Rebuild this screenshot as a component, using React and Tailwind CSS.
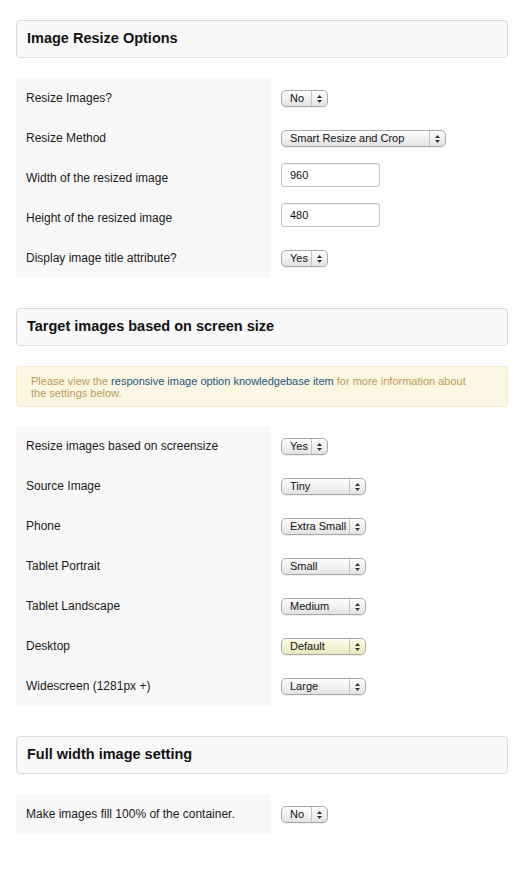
import React from "react";

function Arrows() {
  return (
    <svg width="5" height="8" viewBox="0 0 5 8" className="block">
      <path d="M2.5 0 L5 3 L0 3 Z" fill="#333" />
      <path d="M2.5 8 L5 5 L0 5 Z" fill="#333" />
    </svg>
  );
}

function Select({ value, w, yellow }) {
  const bg = yellow
    ? "bg-gradient-to-b from-[#fdfdf2] via-[#f3f1d2] to-[#e9e7c0]"
    : "bg-gradient-to-b from-[#ffffff] via-[#f1f1f1] to-[#e2e2e2]";
  return (
    <div
      className={`flex h-[17px] items-stretch rounded-[5px] border border-[#a9a9a9] shadow-[0_1px_0_rgba(0,0,0,0.06)] ${bg}`}
      style={{ width: w }}
    >
      <div className="flex flex-1 items-center pl-[8px] text-[11px] leading-none text-[#111]">
        {value}
      </div>
      <div className="flex w-[16px] items-center justify-center border-l border-[#c4c4c4]">
        <Arrows />
      </div>
    </div>
  );
}

function Input({ value }) {
  return (
    <div className="mt-[-7px] flex h-[24px] w-[99px] items-center rounded-[3px] border border-[#c3c3c3] bg-white pl-[8px] text-[11px] text-[#111] shadow-[inset_0_1px_1px_rgba(0,0,0,0.08)]">
      {value}
    </div>
  );
}

function Row({ label, children }) {
  return (
    <div className="flex h-10">
      <div className="w-[255px] shrink-0 bg-[#f8f8f8] pl-[10px] pt-[11px] text-[12px] leading-[18px] text-[#1a1a1a]">
        {label}
      </div>
      <div className="pl-[10px] pt-[12px]">{children}</div>
    </div>
  );
}

function Header({ title }) {
  return (
    <div className="flex h-[38px] items-center rounded-[4px] border border-[#dcdcdc] bg-[#f9f9f9] pl-[10px] text-[14.5px] font-bold text-[#111]">
      {title}
    </div>
  );
}

export default function App() {
  return (
    <div className="min-h-[893px] bg-white pl-4 pr-[11px] pt-5 font-['Liberation_Sans',Arial,sans-serif]">
      <Header title="Image Resize Options" />
      <div className="mt-5">
        <Row label="Resize Images?">
          <Select value="No" w={47} />
        </Row>
        <Row label="Resize Method">
          <Select value="Smart Resize and Crop" w={165} />
        </Row>
        <Row label="Width of the resized image">
          <Input value="960" />
        </Row>
        <Row label="Height of the resized image">
          <Input value="480" />
        </Row>
        <Row label="Display image title attribute?">
          <Select value="Yes" w={47} />
        </Row>
      </div>

      <div className="mt-[30px]">
        <Header title="Target images based on screen size" />
      </div>
      <div className="mt-5 h-[41px] rounded-[4px] border border-[#f6ebcc] bg-[#fcf7e3] pl-[14px] pt-[8px] text-[11px] leading-[12px] text-[#c09a5b]">
        Please view the{" "}
        <span className="text-[#19557e]">responsive image option knowledgebase item</span>{" "}
        for more information about
        <br />
        the settings below.
      </div>
      <div className="mt-[19px]">
        <Row label="Resize images based on screensize">
          <Select value="Yes" w={47} />
        </Row>
        <Row label="Source Image">
          <Select value="Tiny" w={85} />
        </Row>
        <Row label="Phone">
          <Select value="Extra Small" w={85} />
        </Row>
        <Row label="Tablet Portrait">
          <Select value="Small" w={85} />
        </Row>
        <Row label="Tablet Landscape">
          <Select value="Medium" w={85} />
        </Row>
        <Row label="Desktop">
          <Select value="Default" w={85} yellow />
        </Row>
        <Row label="Widescreen (1281px +)">
          <Select value="Large" w={85} />
        </Row>
      </div>

      <div className="mt-[30px]">
        <Header title="Full width image setting" />
      </div>
      <div className="mt-5">
        <Row label="Make images fill 100% of the container.">
          <Select value="No" w={47} />
        </Row>
      </div>
    </div>
  );
}
